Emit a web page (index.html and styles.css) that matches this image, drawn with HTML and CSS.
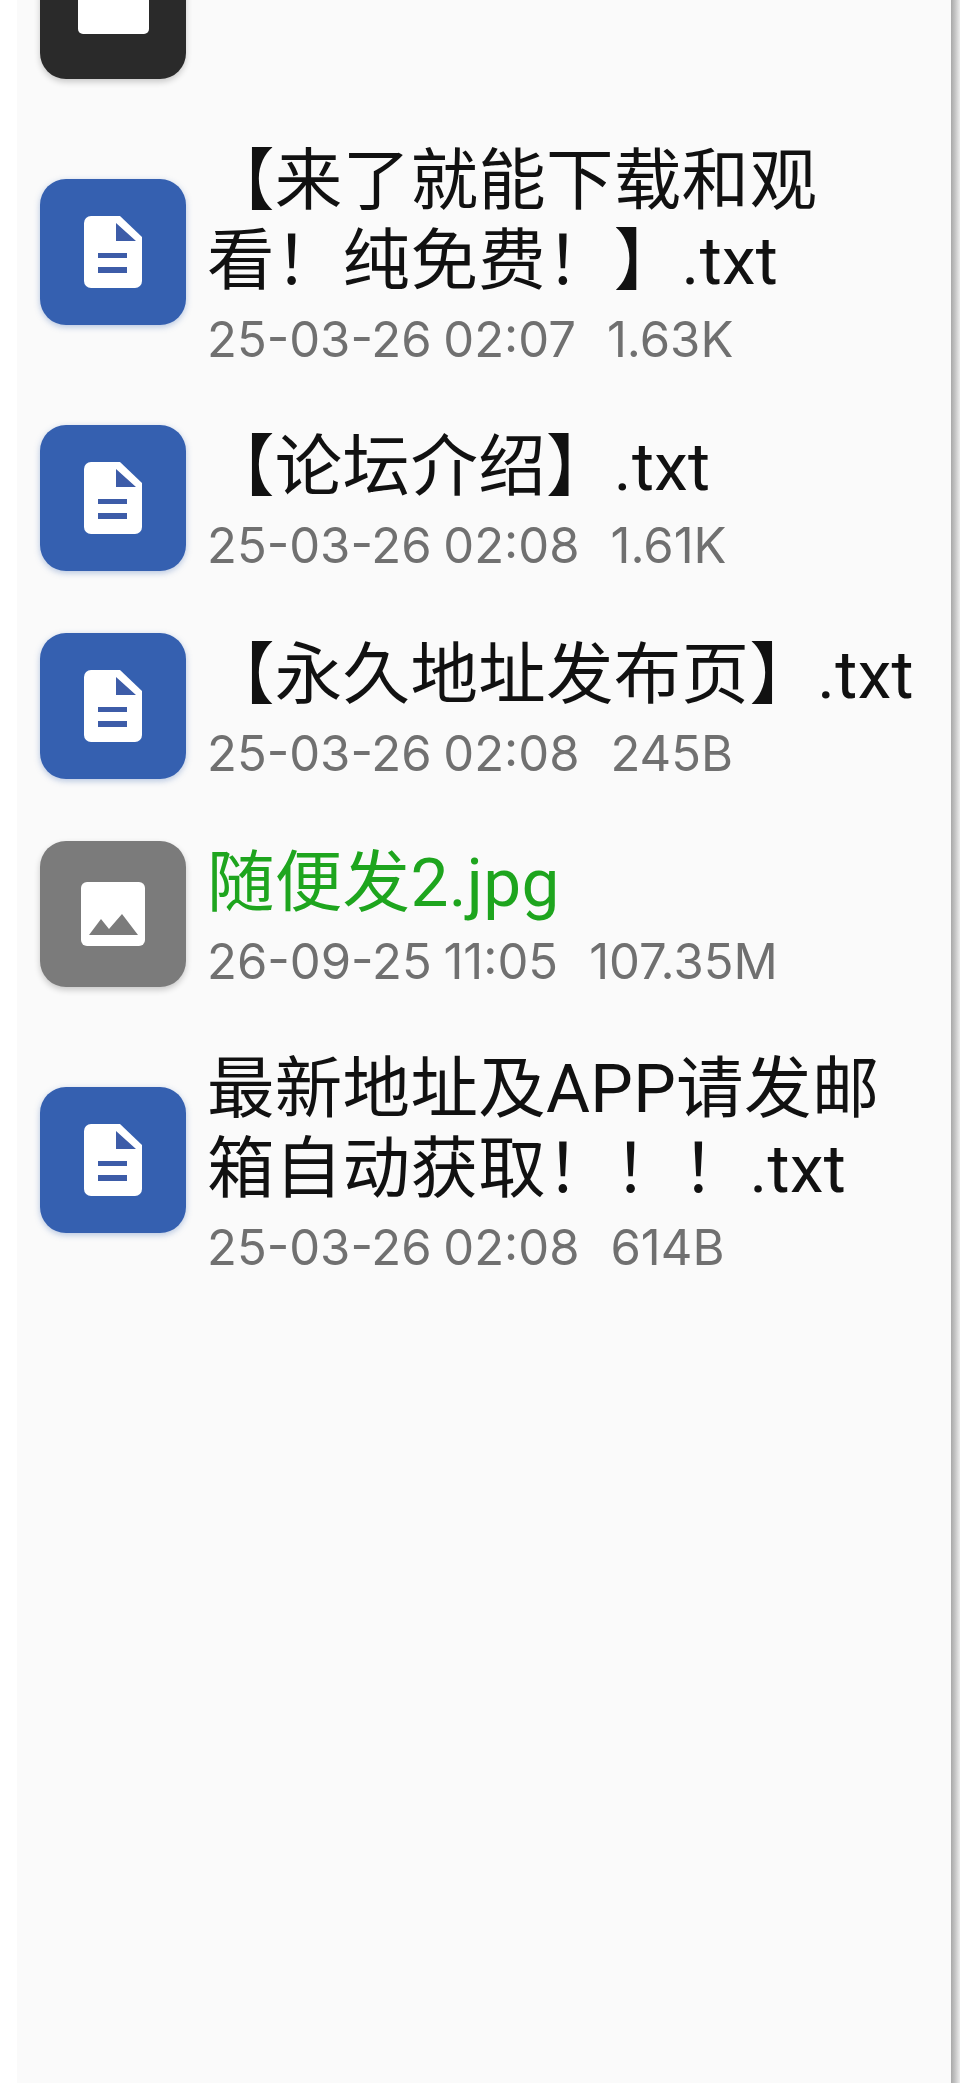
FILE: index.html
```html
<!DOCTYPE html>
<html lang="zh-CN">
<head>
<meta charset="utf-8">
<title>文件列表</title>
<link rel="stylesheet" href="styles.css">
</head>
<body>
<main class="panel">
  <ul class="list">
    <li class="row">
      <div class="icon icon-dark"><span class="dark-glyph"></span></div>
    </li>
    <li class="row">
      <div class="icon icon-blue">
        <svg class="glyph" viewBox="0 0 58 72"><path fill="#fff" d="M7 0H36L58 21V65a7 7 0 0 1-7 7H7a7 7 0 0 1-7-7V7a7 7 0 0 1 7-7Z"/><path fill="#3d5ca8" d="M32 7L52 25H32ZM14 37H43V42H14ZM14 51H43V57H14Z"/></svg>
      </div>
      <div class="info">
        <div class="name">【来了就能下载和观看！纯免费！】.txt</div>
        <div class="meta"><span>25-03-26 02:07</span><span>1.63K</span></div>
      </div>
    </li>
    <li class="row">
      <div class="icon icon-blue">
        <svg class="glyph" viewBox="0 0 58 72"><path fill="#fff" d="M7 0H36L58 21V65a7 7 0 0 1-7 7H7a7 7 0 0 1-7-7V7a7 7 0 0 1 7-7Z"/><path fill="#3d5ca8" d="M32 7L52 25H32ZM14 37H43V42H14ZM14 51H43V57H14Z"/></svg>
      </div>
      <div class="info">
        <div class="name">【论坛介绍】.txt</div>
        <div class="meta"><span>25-03-26 02:08</span><span>1.61K</span></div>
      </div>
    </li>
    <li class="row">
      <div class="icon icon-blue">
        <svg class="glyph" viewBox="0 0 58 72"><path fill="#fff" d="M7 0H36L58 21V65a7 7 0 0 1-7 7H7a7 7 0 0 1-7-7V7a7 7 0 0 1 7-7Z"/><path fill="#3d5ca8" d="M32 7L52 25H32ZM14 37H43V42H14ZM14 51H43V57H14Z"/></svg>
      </div>
      <div class="info">
        <div class="name">【永久地址发布页】.txt</div>
        <div class="meta"><span>25-03-26 02:08</span><span>245B</span></div>
      </div>
    </li>
    <li class="row">
      <div class="icon icon-gray">
        <svg class="glyph-img" viewBox="0 0 64 64"><rect width="64" height="64" rx="6" fill="#fff"/><path fill="#7b7b7b" d="M8 53L20 37L28 47L41 32L57 53Z"/></svg>
      </div>
      <div class="info">
        <div class="name name-green">随便发2.jpg</div>
        <div class="meta"><span>26-09-25 11:05</span><span>107.35M</span></div>
      </div>
    </li>
    <li class="row">
      <div class="icon icon-blue">
        <svg class="glyph" viewBox="0 0 58 72"><path fill="#fff" d="M7 0H36L58 21V65a7 7 0 0 1-7 7H7a7 7 0 0 1-7-7V7a7 7 0 0 1 7-7Z"/><path fill="#3d5ca8" d="M32 7L52 25H32ZM14 37H43V42H14ZM14 51H43V57H14Z"/></svg>
      </div>
      <div class="info">
        <div class="name">最新地址及APP请发邮箱自动获取！！！.txt</div>
        <div class="meta"><span>25-03-26 02:08</span><span>614B</span></div>
      </div>
    </li>
  </ul>
</main>
<div class="edge"></div>
</body>
</html>
```
FILE: styles.css
```css
* { box-sizing: border-box; }
html, body { margin: 0; height: 100%; background: #fff; overflow: hidden; }
body { display: flex; padding-left: 17px; }
.panel {
  flex: 1;
  min-width: 0;
  height: 2083px;
  background: #fafafa;
  overflow: hidden;
}
.edge {
  flex: none;
  width: 9px;
  height: 2083px;
  background: linear-gradient(to right, #a8a8a8, #c4c4c4 45%, #ececec);
}
.list {
  list-style: none;
  margin: -67px 0 0;
  padding: 0 20px 0 23px;
  display: flex;
  flex-direction: column;
  gap: 62px;
}
.row { display: flex; align-items: center; gap: 21px; }
.icon {
  flex: none;
  width: 146px;
  height: 146px;
  border-radius: 26px;
  display: flex;
  align-items: center;
  justify-content: center;
  box-shadow: 0 3px 6px rgba(0, 0, 0, .2);
}
.icon-dark { background: #2a2a2a; }
.icon-blue { background: #3560b0; box-shadow: 0 2px 6px rgba(53, 96, 176, .35); }
.icon-gray { background: #7b7b7b; }
.dark-glyph { width: 71px; height: 72px; margin-bottom: 16px; background: #fff; border-radius: 5px; }
.glyph { width: 58px; height: 72px; }
.glyph-img { width: 64px; height: 64px; }
.info { flex: 1; min-width: 0; }
.name {
  font-family: "Roboto", "Noto Sans CJK SC", sans-serif;
  font-size: 67.5px;
  line-height: 80px;
  letter-spacing: .3px;
  color: #111;
  text-spacing-trim: space-all;
  text-autospace: no-autospace;
}
.name-green { color: #1ea51e; }
.meta {
  font-family: "Inter", "Roboto", sans-serif;
  font-size: 49px;
  line-height: 62px;
  word-spacing: -2px;
  margin-top: 8px;
  margin-bottom: -8px;
  color: #707070;
  display: flex;
  gap: 31px;
}
```
